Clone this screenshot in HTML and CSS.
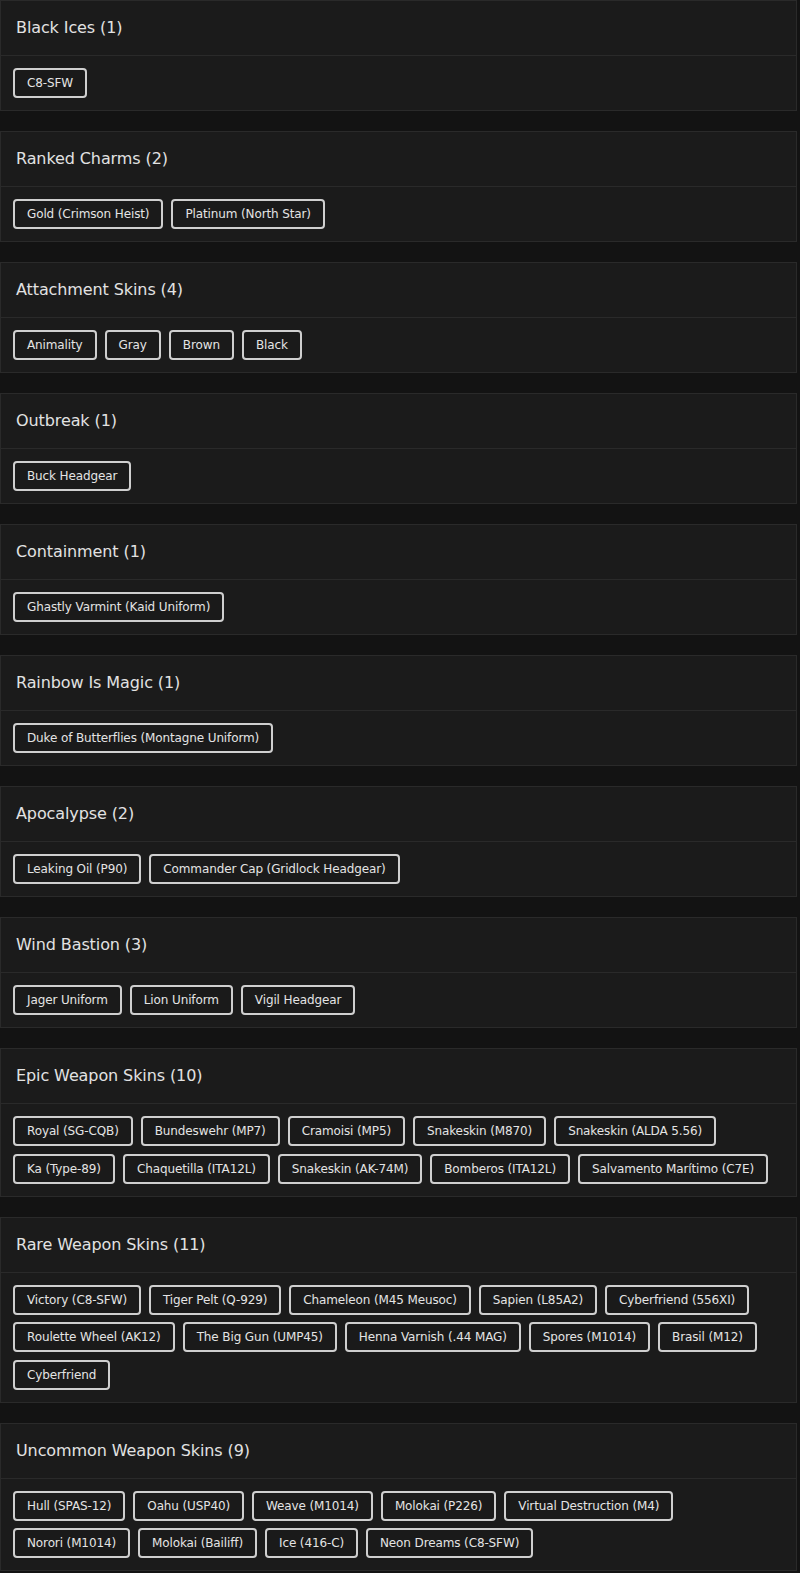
FILE: index.html
```html
<!DOCTYPE html>
<html lang="en">
<head>
<meta charset="utf-8">
<title>Items</title>
<link rel="stylesheet" href="styles.css">
</head>
<body>
<main class="list">
  <section class="card">
    <h2 class="card-title">Black Ices (1)</h2>
    <div class="chips"><span class="chip">C8-SFW</span></div>
  </section>
  <section class="card">
    <h2 class="card-title">Ranked Charms (2)</h2>
    <div class="chips"><span class="chip">Gold (Crimson Heist)</span><span class="chip">Platinum (North Star)</span></div>
  </section>
  <section class="card">
    <h2 class="card-title">Attachment Skins (4)</h2>
    <div class="chips"><span class="chip">Animality</span><span class="chip">Gray</span><span class="chip">Brown</span><span class="chip">Black</span></div>
  </section>
  <section class="card">
    <h2 class="card-title">Outbreak (1)</h2>
    <div class="chips"><span class="chip">Buck Headgear</span></div>
  </section>
  <section class="card">
    <h2 class="card-title">Containment (1)</h2>
    <div class="chips"><span class="chip">Ghastly Varmint (Kaid Uniform)</span></div>
  </section>
  <section class="card">
    <h2 class="card-title">Rainbow Is Magic (1)</h2>
    <div class="chips"><span class="chip">Duke of Butterflies (Montagne Uniform)</span></div>
  </section>
  <section class="card">
    <h2 class="card-title">Apocalypse (2)</h2>
    <div class="chips"><span class="chip">Leaking Oil (P90)</span><span class="chip">Commander Cap (Gridlock Headgear)</span></div>
  </section>
  <section class="card">
    <h2 class="card-title">Wind Bastion (3)</h2>
    <div class="chips"><span class="chip">Jager Uniform</span><span class="chip">Lion Uniform</span><span class="chip">Vigil Headgear</span></div>
  </section>
  <section class="card">
    <h2 class="card-title">Epic Weapon Skins (10)</h2>
    <div class="chips"><span class="chip">Royal (SG-CQB)</span><span class="chip">Bundeswehr (MP7)</span><span class="chip">Cramoisi (MP5)</span><span class="chip">Snakeskin (M870)</span><span class="chip">Snakeskin (ALDA 5.56)</span><span class="chip">Ka (Type-89)</span><span class="chip">Chaquetilla (ITA12L)</span><span class="chip">Snakeskin (AK-74M)</span><span class="chip">Bomberos (ITA12L)</span><span class="chip">Salvamento Marítimo (C7E)</span></div>
  </section>
  <section class="card">
    <h2 class="card-title">Rare Weapon Skins (11)</h2>
    <div class="chips"><span class="chip">Victory (C8-SFW)</span><span class="chip">Tiger Pelt (Q-929)</span><span class="chip">Chameleon (M45 Meusoc)</span><span class="chip">Sapien (L85A2)</span><span class="chip">Cyberfriend (556XI)</span><span class="chip">Roulette Wheel (AK12)</span><span class="chip">The Big Gun (UMP45)</span><span class="chip">Henna Varnish (.44 MAG)</span><span class="chip">Spores (M1014)</span><span class="chip">Brasil (M12)</span><span class="chip">Cyberfriend</span></div>
  </section>
  <section class="card">
    <h2 class="card-title">Uncommon Weapon Skins (9)</h2>
    <div class="chips"><span class="chip">Hull (SPAS-12)</span><span class="chip">Oahu (USP40)</span><span class="chip">Weave (M1014)</span><span class="chip">Molokai (P226)</span><span class="chip">Virtual Destruction (M4)</span><span class="chip">Norori (M1014)</span><span class="chip">Molokai (Bailiff)</span><span class="chip">Ice (416-C)</span><span class="chip">Neon Dreams (C8-SFW)</span></div>
  </section>
</main>
</body>
</html>
```
FILE: styles.css
```css
html, body {
  margin: 0;
  padding: 0;
  background: #131313;
}
body {
  font-family: "DejaVu Sans", sans-serif;
  color: #e2e2e2;
}
.list {
  width: 797px;
  display: flex;
  flex-direction: column;
  gap: 20px;
}
.card {
  background: #1b1b1b;
  border: 1px solid #2a2a2a;
}
.card-title {
  margin: 0;
  padding: 15px 15px;
  font-size: 16px;
  font-weight: 500;
  line-height: 24px;
  letter-spacing: -0.1px;
  border-bottom: 1px solid #2a2a2a;
}
.chips {
  display: flex;
  flex-wrap: wrap;
  gap: 7.6px 8px;
  padding: 12px;
}
.chip {
  display: inline-block;
  font-size: 12px;
  line-height: 16px;
  padding: 5px 12px;
  border: 2px solid #cfcfcf;
  border-radius: 4px;
  color: #e4e4e4;
  background: #1a1a1a;
  letter-spacing: -0.12px;
}
```
